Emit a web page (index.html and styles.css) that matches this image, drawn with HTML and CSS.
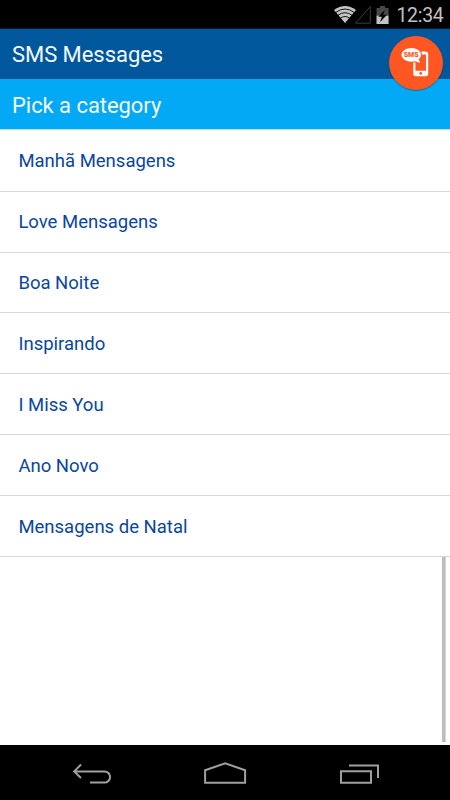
FILE: index.html
```html
<!DOCTYPE html>
<html lang="pt">
<head>
<meta charset="utf-8">
<title>SMS Messages</title>
<link rel="stylesheet" href="styles.css">
</head>
<body>
<div class="phone">
  <div class="status">
    <svg class="signals" width="60" height="22" viewBox="333 2 60 22">
      <path d="M335 9Q346 1 357 9L346 22Z" fill="#c4c4c4"/>
      <path d="M336.5 11.6Q346 4.4 355.5 11.6M338.7 14.4Q346 9 353.3 14.4M341.2 17.3Q346 13.7 350.8 17.3" fill="none" stroke="#000" stroke-width="0.9"/>
      <path d="M371.3 5.5V22.2H356.5Z" fill="none" stroke="#3c3c3c" stroke-width="1"/>
      <path d="M377.5 7H381V5H386V7H389.6V15H377.5Z" fill="#484848"/>
      <path d="M377.5 14.7H389.6V23H377.5Z" fill="#c4c4c4"/>
      <path d="M385.8 9L379.3 15.8H382.9L380.9 21.2L388 13.8H384.2Z" fill="#000"/>
    </svg>
    <span class="clock">12:34</span>
  </div>
  <header class="appbar">
    <h1 class="title">SMS Messages</h1>
    <button class="fab" aria-label="SMS">
      <svg width="54" height="54" viewBox="0 0 54 54">
        <path d="M32.5 15.5H36.8Q39.2 15.5 39.2 18V38Q39.2 40.3 36.8 40.3H26.7Q24.3 40.3 24.3 38V26.5H26.4V34.8H37V18.6H33Z" fill="#fff"/>
        <ellipse cx="22.3" cy="18.8" rx="9.9" ry="6.9" fill="#fff"/>
        <path d="M24 24.5L31.2 27L28.8 21Z" fill="#fff"/>
        <circle cx="31.7" cy="37.4" r="1.4" fill="#ff5722"/>
        <text x="22.2" y="21" class="bubble">SMS</text>
      </svg>
    </button>
  </header>
  <h2 class="subbar"><span>Pick a category</span></h2>
  <ul class="list">
    <li>Manhã Mensagens</li>
    <li>Love Mensagens</li>
    <li>Boa Noite</li>
    <li>Inspirando</li>
    <li>I Miss You</li>
    <li>Ano Novo</li>
    <li>Mensagens de Natal</li>
  </ul>
  <div class="rest"><div class="scroll"></div></div>
  <nav class="nav">
    <svg width="450" height="55" viewBox="0 745 450 55" fill="none" stroke="#a0a0a0" stroke-width="2">
      <path d="M81 764.5L74.2 771.4L81 778M74.5 771.4H104.5A5.6 5.6 0 0 1 104.5 782.6H90"/>
      <path d="M205.1 782.7V770.2L225.2 763.4L245.1 770.2V782.7Z"/>
      <path d="M341 771.2H371V782.7H341ZM349 765.4H378V778"/>
    </svg>
  </nav>
</div>
</body>
</html>
```
FILE: styles.css
```css
* { box-sizing: border-box; }
body { margin: 0; background: #fff; font-family: Roboto, sans-serif; }
.phone { display: flex; flex-direction: column; width: 450px; height: 800px; overflow: hidden; }
.status {
  display: flex; align-items: center; justify-content: flex-end;
  height: 29px; padding: 3px 6.5px 0 0; background: #000; border-bottom: 1px solid #00172a;
}
.signals { margin: 0 4.5px 4px 0; }
.clock { font-size: 19.5px; color: #c0c0c0; letter-spacing: -0.3px; line-height: 24px; }
.appbar {
  position: relative; display: flex; align-items: center;
  height: 50px; padding: 1px 12px 0; background: #01579b;
}
.title, .subbar { margin: 0; font-size: 22px; font-weight: 400; color: #f3f9fd; letter-spacing: -0.05px; }
.fab {
  position: absolute; top: 7px; right: 7px; z-index: 1;
  width: 54px; height: 54px; padding: 0; border: 0; border-radius: 50%;
  background: #ff5722; box-shadow: 0 1px 1px rgba(0, 0, 0, 0.3);
}
.fab svg { display: block; }
.bubble {
  font-family: Roboto, sans-serif; font-size: 7px; font-weight: 900; fill: #ff5722;
  text-anchor: middle;
}
.subbar {
  display: flex; align-items: center; height: 51px; padding: 3px 12px 0;
  background: #03a9f4; border-bottom: 1px solid #b9dcef;
}
.list { margin: 0; padding: 0.75px 0 0; list-style: none; }
.list li {
  display: flex; align-items: center; height: 60.92px; padding: 1.5px 18.4px 0;
  border-bottom: 1px solid #d8d8d8; font-size: 18.5px; color: #0846a0; letter-spacing: 0;
}
.rest { display: flex; justify-content: flex-end; flex: 1; padding: 0 4px 3px; }
.scroll { width: 4px; background: #bdbdbd; border-right: 1px solid #d5d5d5; }
.nav { height: 55px; background: #000; }
.nav svg { display: block; }
```
